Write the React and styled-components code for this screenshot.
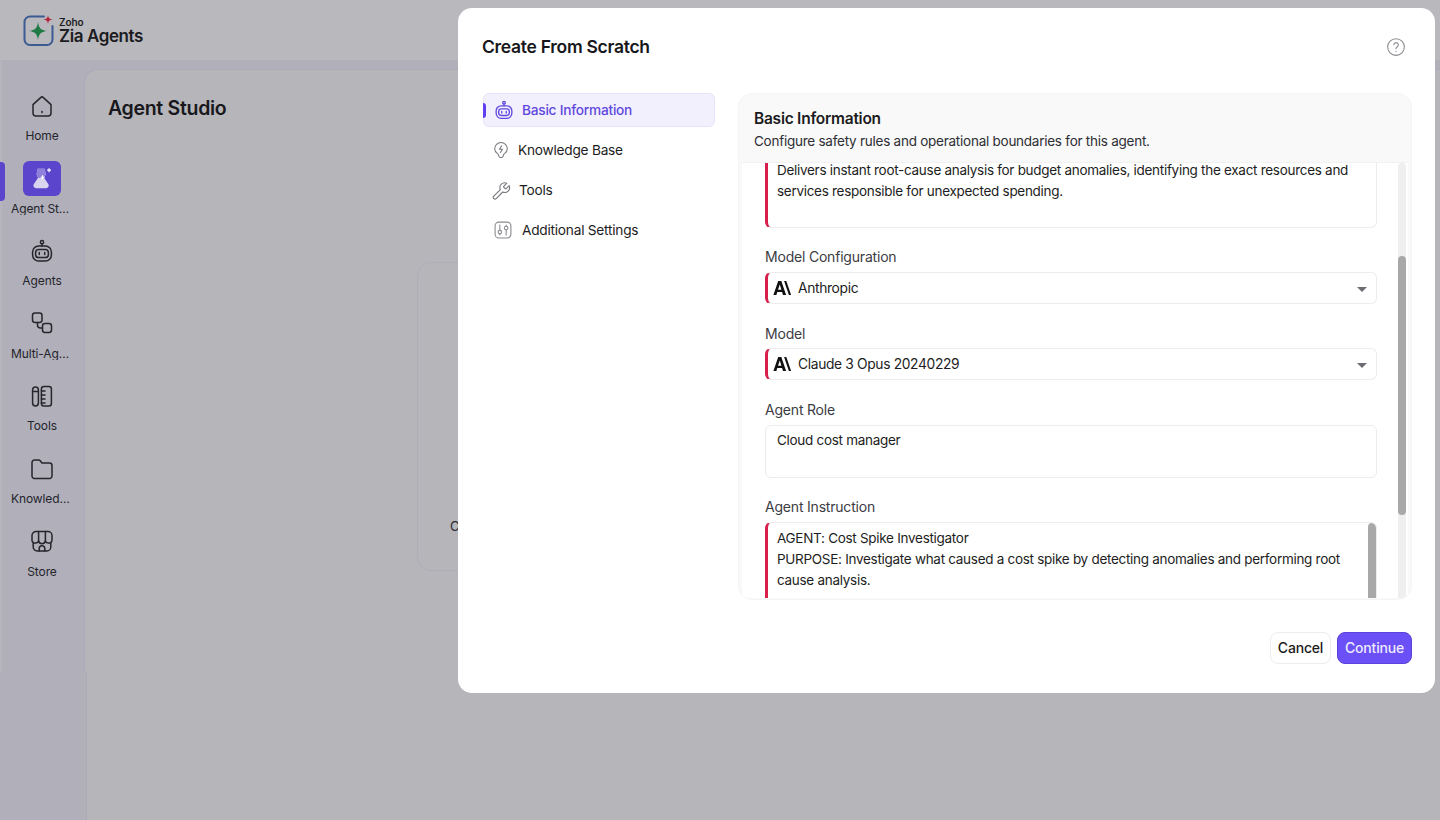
import styled, { createGlobalStyle } from "styled-components";

const GlobalStyle = createGlobalStyle`
  html, body {
    margin: 0;
    height: 100%;
    background: #b6b5ba;
    overflow: hidden;
  }
  body {
    font-family: "Inter", "Noto Sans", "Liberation Sans", sans-serif;
    color: #1b1b20;
  }
  * {
    box-sizing: border-box;
  }
`;

const Page = styled.div`
  position: relative;
  width: 1440px;
  height: 820px;
  overflow: hidden;
  display: flex;
  flex-direction: column;
`;
const Header = styled.header`
  height: 61px;
  flex: none;
  display: flex;
  align-items: center;
  padding-left: 23px;
  gap: 4px;
  background: #b9b8bd;
  border-bottom: 1px solid #b1b0b8;
`;
const LogoText = styled.div`
  display: flex;
  flex-direction: column;
  margin-top: 1px;
`;
const LogoSmall = styled.span`
  font-size: 10px;
  line-height: 10px;
  font-weight: 600;
  letter-spacing: -0.1px;
`;
const LogoBig = styled.span`
  font-size: 17px;
  line-height: 17px;
  margin-top: 1px;
  font-weight: 600;
  letter-spacing: -0.4px;
`;
const Body = styled.div`
  height: 611px;
  flex: none;
  display: flex;
  background: #b0afba;
`;
const Bottom = styled.div`
  flex: 1;
  display: flex;
  background: #b6b5ba;
`;
const BottomRail = styled.div`
  width: 87px;
  background: #b0afba;
  border-right: 1px solid #aaa9b5;
`;
const Sidebar = styled.nav`
  width: 84px;
  flex: none;
  position: relative;
  padding-top: 9px;
  border-left: 2px solid #b6b5bd;
`;
const NavItem = styled.div`
  height: 72.6px;
  margin-left: -2px;
  display: flex;
  flex-direction: column;
  align-items: center;
  width: 84px;
  padding-top: ${(p) => (p.$active ? "18px" : "21px")};
`;
const NavIcon = styled.div`
  width: 38px;
  height: ${(p) => (p.$active ? "38px" : "32px")};
  border-radius: 6px;
  display: flex;
  align-items: center;
  justify-content: center;
  background: ${(p) => (p.$active ? "#5a45cc" : "transparent")};
`;
const NavLabel = styled.span`
  width: 62px;
  margin-top: ${(p) => (p.$active ? "5px" : "8px")};
  font-size: 12px;
  line-height: 16px;
  text-align: center;
  color: #24242a;
  white-space: nowrap;
  overflow: hidden;
  text-overflow: ellipsis;
  letter-spacing: -0.1px;
`;
const ActiveMark = styled.span`
  position: absolute;
  left: -2px;
  top: 101px;
  width: 5px;
  height: 39px;
  background: #5a45cc;
  border-radius: 0 4px 4px 0;
`;
const Main = styled.main`
  flex: 1;
  margin-top: 8px;
  background: #b6b5ba;
  border-top: 1px solid #aaaabb;
  border-left: 1px solid #aaaabb;
  border-top-left-radius: 14px;
  padding: 26px 0 0 23px;
  position: relative;
`;
const PageTitle = styled.h1`
  margin: 0;
  font-size: 19.5px;
  line-height: 24px;
  font-weight: 600;
  letter-spacing: -0.3px;
  color: #18181c;
`;
const EmptyCard = styled.div`
  width: 690px;
  height: 309px;
  margin: 142px 0 0 309px;
  border: 1px solid #aeaeb8;
  border-radius: 14px;
  padding: 255px 0 0 32px;
  font-size: 13px;
  color: #2a2a30;
`;

const Modal = styled.section`
  position: absolute;
  left: 458px;
  top: 8px;
  width: 977px;
  height: 685px;
  background: #fff;
  border-radius: 14px;
  padding: 0 23px 0 24px;
  display: flex;
  flex-direction: column;
`;
const ModalHead = styled.div`
  height: 85px;
  flex: none;
  display: flex;
  align-items: center;
  justify-content: space-between;
  padding: 0 6px 8px 0;
`;
const ModalTitle = styled.h2`
  margin: 0;
  font-size: 17.5px;
  font-weight: 600;
  letter-spacing: -0.3px;
  color: #17171b;
`;
const Columns = styled.div`
  flex: none;
  display: flex;
  gap: 23px;
`;
const Steps = styled.div`
  width: 233px;
  flex: none;
  display: flex;
  flex-direction: column;
  padding-left: 1px;
`;
const Step = styled.div`
  position: relative;
  height: ${(p) => (p.$active ? "34px" : "40px")};
  margin-bottom: ${(p) => (p.$active ? "3px" : "0")};
  display: flex;
  align-items: center;
  gap: ${(p) => p.$gap}px;
  padding: 0 0 0 ${(p) => p.$pad}px;
  font-size: 13.7px;
  letter-spacing: -0.24px;
  border-radius: 6px;
  color: ${(p) => (p.$active ? "#6148dd" : "#1d1d22")};
  font-weight: ${(p) => (p.$active ? 500 : 400)};
  background: ${(p) => (p.$active ? "#f3f0fe" : "transparent")};
  border: ${(p) => (p.$active ? "1px solid #e6e2fb" : "none")};
`;
const StepMark = styled.span`
  position: absolute;
  left: -1px;
  top: 9px;
  width: 3px;
  height: 15px;
  background: #5f3ff0;
  border-radius: 0 3px 3px 0;
`;
const Panel = styled.div`
  width: 674px;
  height: 507px;
  flex: none;
  display: flex;
  flex-direction: column;
  background: #f9f9f9;
  border-radius: 14px;
  border: 1px solid #f5f5f5;
  overflow: hidden;
`;
const PanelHead = styled.div`
  height: 68px;
  flex: none;
  padding: 15px 15px 0;
`;
const PanelTitle = styled.h3`
  margin: 0;
  font-size: 15.5px;
  line-height: 20px;
  font-weight: 600;
  letter-spacing: -0.25px;
  color: #1b1b20;
`;
const PanelSub = styled.p`
  margin: 2px 0 0;
  font-size: 13.5px;
  line-height: 20px;
  letter-spacing: -0.25px;
  color: #2e2e34;
`;
const Scroller = styled.div`
  height: 436px;
  margin: 0 3px;
  background: #fff;
  border-top: 1px solid #f1f1f1;
  display: flex;
  overflow: hidden;
`;
const Form = styled.div`
  flex: 1;
  padding-left: 23px;
  padding-right: 21px;
  overflow: hidden;
`;
const Track = styled.div`
  width: 8px;
  flex: none;
  margin-right: 2px;
  background: #efefef;
  border-radius: 4px 4px 0 0;
  padding-top: 93px;
`;
const Thumb = styled.div`
  width: 8px;
  height: 259px;
  background: #a8a8a8;
  border-radius: 4px;
`;
const Label = styled.div`
  font-size: 14px;
  line-height: 18px;
  letter-spacing: -0.2px;
  color: #3c3c43;
  margin: ${(p) => p.$top}px 0 ${(p) => p.$bottom ?? 6}px;
`;
const TextBox = styled.div`
  position: relative;
  height: ${(p) => p.$height}px;
  margin-top: ${(p) => p.$shift || 0}px;
  padding: ${(p) => (p.$error ? "5px" : "4px")} 26px 0 ${(p) => (p.$error ? "9px" : "11px")};
  font-size: 13.5px;
  line-height: 21px;
  letter-spacing: -0.29px;
  color: #1d1d22;
  background: #fff;
  border: 1px solid #ececec;
  border-left: ${(p) => (p.$error ? "3px solid #d81e4a" : "1px solid #ececec")};
  border-radius: 6px;
  overflow: hidden;
`;
const SelectBox = styled.div`
  height: 32px;
  display: flex;
  align-items: center;
  gap: 6px;
  padding: 0 9px 1px 5px;
  font-size: 13.8px;
  letter-spacing: -0.34px;
  color: #1d1d22;
  background: #fff;
  border: 1px solid #ececec;
  border-left: 3px solid #d81e4a;
  border-radius: 6px;
`;
const Caret = styled.span`
  margin-left: auto;
  width: 0;
  height: 0;
  margin-top: 3px;
  border-left: 5px solid transparent;
  border-right: 5px solid transparent;
  border-top: 5px solid #6c6c72;
`;
const InnerBar = styled.span`
  position: absolute;
  top: 0;
  right: 0;
  width: 8px;
  height: 100px;
  background: #a8a8a8;
  border-radius: 4px;
`;
const Footer = styled.div`
  flex: none;
  display: flex;
  justify-content: flex-end;
  gap: 6px;
  margin-top: 32px;
`;
const Button = styled.button`
  height: 32px;
  padding: 0 0 1px;
  width: ${(p) => (p.$primary ? "75px" : "61px")};
  font-family: inherit;
  font-size: 14px;
  font-weight: 500;
  letter-spacing: -0.2px;
  border-radius: 8px;
  color: ${(p) => (p.$primary ? "#eeeaff" : "#1b1b20")};
  background: ${(p) => (p.$primary ? "#6a50f6" : "#fff")};
  border: 1px solid ${(p) => (p.$primary ? "#5a43d8" : "#ededed")};
`;

const Svg = ({ size = 24, children, color = "#26262c", width = 1.5 }) => (
  <svg
    width={size}
    height={size}
    viewBox="0 0 24 24"
    fill="none"
    stroke={color}
    strokeWidth={width}
    strokeLinecap="round"
    strokeLinejoin="round"
  >
    {children}
  </svg>
);

const BotShape = () => (
  <>
    <circle cx="12" cy="3.2" r="1.6" />
    <path d="M12 4.8V7" />
    <rect x="2.6" y="7" width="18.8" height="15" rx="6" />
    <rect x="5.6" y="10.6" width="12.8" height="8" rx="3.2" />
    <path d="M9.3 13.6v2M14.7 13.6v2" />
  </>
);

const HomeIcon = () => (
  <Svg>
    <path d="M3 10.6 10.6 3.6a2 2 0 0 1 2.8 0L21 10.6v8.4a3 3 0 0 1-3 3H6a3 3 0 0 1-3-3z" />
    <path d="M12 17.6v.8" />
  </Svg>
);
const StudioIcon = () => (
  <svg width="26" height="26" viewBox="0 0 24 24">
    <path d="M8 3.5h6.5l1 5-1.5 3.5 3.8 5.5a2.5 2.5 0 0 1-2 3.9H6.5a2.5 2.5 0 0 1-2-3.9L8.3 12 7 8.5z" fill="#d9d5ee" />
    <path d="M8 3.5h6.5l1 5-1.500 3.500H8.300L7 8.500z" fill="#8f80dc" />
    <path d="M18.500 3v3.600M16.700 4.800h3.600M12.500 9.500v3.600M10.700 11.300h3.600" stroke="#fff" strokeWidth="1.1" />
  </svg>
);
const AgentsIcon = () => (
  <Svg>
    <BotShape />
  </Svg>
);
const MultiIcon = () => (
  <Svg>
    <rect x="2.5" y="2" width="9.5" height="9.5" rx="2.4" />
    <rect x="12.5" y="12.5" width="9" height="9" rx="2.4" />
    <path d="M7.5 11.5V14a3 3 0 0 0 3 3h2" />
  </Svg>
);
const ToolsIcon = () => (
  <Svg>
    <path d="M2.6 6a2.9 2.9 0 0 1 5.8 0v13a2.9 2.9 0 0 1-5.8 0z" />
    <path d="M2.6 7.5h5.8" />
    <rect x="11.4" y="2.6" width="10" height="19.4" rx="2.5" />
    <path d="M11.4 7H15M11.4 11H15M11.4 15H15M11.4 19H15" />
  </Svg>
);
const FolderIcon = () => (
  <Svg>
    <path d="M2 5.5A2.5 2.5 0 0 1 4.5 3h4.2a2 2 0 0 1 1.5.7L12 6h7.5A2.5 2.5 0 0 1 22 8.5V19a2.5 2.5 0 0 1-2.5 2.5h-15A2.5 2.5 0 0 1 2 19z" />
  </Svg>
);
const StoreIcon = () => (
  <Svg>
    <path d="M6 2.5h12a4 4 0 0 1 4 4v5a3 3 0 0 1-3.4 2.6A3.4 3.4 0 0 1 15.4 12a3.5 3.5 0 0 1-6.8 0 3.4 3.4 0 0 1-3.2 2.1A3 3 0 0 1 2 11.5v-5a4 4 0 0 1 4-4z" />
    <path d="M8.6 2.5V12M15.4 2.5V12" />
    <path d="M3.2 13.6V18a4 4 0 0 0 4 4h9.6a4 4 0 0 0 4-4v-4.4" />
    <path d="M9.2 22v-2.5a2.8 2.8 0 0 1 5.6 0V22" />
  </Svg>
);
const ZiaLogo = () => (
  <svg width="32" height="32" viewBox="0 0 32 32" fill="none">
    <path
      d="M21 2.5H7A5.5 5.5 0 0 0 1.5 8v17.500A5.5 5.5 0 0 0 7 31h17a5.5 5.5 0 0 0 5.5-5.5V12"
      stroke="#3c5a94"
      strokeWidth="2"
      strokeLinecap="round"
    />
    <path d="M15 8c.7 6 2.8 8.2 9.2 9-6.4.8-8.5 3-9.2 9-.7-6-2.8-8.2-9.2-9 6.4-.8 8.5-3 9.2-9z" fill="#1f7a45" />
    <path d="M25 1c.3 3 1.4 4.1 4.5 4.5-3.1.4-4.2 1.5-4.5 4.5-.3-3-1.4-4.1-4.5-4.5 3.1-.4 4.2-1.5 4.5-4.5z" fill="#b3243a" />
  </svg>
);
const HelpIcon = () => (
  <Svg size={20} color="#8a8a90" width={1.3}>
    <circle cx="12" cy="12" r="10" />
    <path d="M9.4 9.4a2.7 2.7 0 1 1 4.2 2.3c-1 .6-1.6 1.2-1.6 2.3" />
    <path d="M12 17.2v.1" />
  </Svg>
);
const BulbIcon = () => (
  <Svg size={18} color="#77777d" width={1.4}>
    <path d="M12 2a8.4 8.4 0 0 0-8.4 8.4c0 3 1.6 5.1 3.7 6.5.9.6 1.3 1.3 1.5 2.100l.3 1.100a2.400 2.400 0 0 0 2.300 1.900h1.200a2.400 2.400 0 0 0 2.300-1.900l.3-1.100c.2-.8.6-1.500 1.500-2.100 2.100-1.400 3.700-3.500 3.700-6.500A8.400 8.400 0 0 0 12 2z" />
    <path d="M12.8 6.5 10 11h4l-2.800 4.400" />
  </Svg>
);
const WrenchIcon = () => (
  <Svg size={19} color="#77777d" width={1.4}>
    <path d="M15 6.500a1 1 0 0 0 0 1.400l1.600 1.600a1 1 0 0 0 1.400 0l3.600-3.600a6 6 0 0 1-8 8l-8.300 8.300a2.100 2.100 0 0 1-3-3l8.300-8.300a6 6 0 0 1 8-8z" />
  </Svg>
);
const SettingsIcon = () => (
  <Svg size={20} color="#8a8a90" width={1.3}>
    <rect x="2.5" y="2.5" width="19" height="19" rx="4.5" />
    <circle cx="8.2" cy="14.5" r="2.1" />
    <circle cx="15.8" cy="9.5" r="2.1" />
    <path d="M8.2 6v6.4M8.2 16.6V18M15.8 6v1.4M15.8 11.6V18" />
  </Svg>
);
const AnthropicLogo = () => (
  <svg width="19" height="14" viewBox="0 0 19 14">
    <path d="M5.2 0h3.100l4.800 14H10l-.9-2.900H4.300L3.400 14H.4zm3.200 8.800L6.800 3.500 5 8.800z" fill="#111" />
    <path d="M11.100 0h2.200l4.800 14h-2.200z" fill="#111" />
  </svg>
);

const navItems = [
  { label: "Home", icon: <HomeIcon /> },
  { label: "Agent Studio", icon: <StudioIcon />, active: true },
  { label: "Agents", icon: <AgentsIcon /> },
  { label: "Multi-Agents", icon: <MultiIcon /> },
  { label: "Tools", icon: <ToolsIcon /> },
  { label: "Knowledge Base", icon: <FolderIcon /> },
  { label: "Store", icon: <StoreIcon /> },
];

export default function App() {
  return (
    <Page>
      <GlobalStyle />
      <Header>
        <ZiaLogo />
        <LogoText>
          <LogoSmall>Zoho</LogoSmall>
          <LogoBig>Zia Agents</LogoBig>
        </LogoText>
      </Header>
      <Body>
        <Sidebar>
          <ActiveMark />
          {navItems.map((item) => (
            <NavItem key={item.label} $active={item.active}>
              <NavIcon $active={item.active}>{item.icon}</NavIcon>
              <NavLabel $active={item.active}>{item.label}</NavLabel>
            </NavItem>
          ))}
        </Sidebar>
        <Main>
          <PageTitle>Agent Studio</PageTitle>
          <EmptyCard>Create</EmptyCard>
        </Main>
      </Body>
      <Bottom>
        <BottomRail />
      </Bottom>

      <Modal>
        <ModalHead>
          <ModalTitle>Create From Scratch</ModalTitle>
          <HelpIcon />
        </ModalHead>
        <Columns>
          <Steps>
            <Step $active $gap={8} $pad={10}>
              <StepMark />
              <Svg size={20} color="#6148dd" width={1.6}>
                <BotShape />
              </Svg>
              Basic Information
            </Step>
            <Step $gap={8} $pad={9}>
              <BulbIcon />
              Knowledge Base
            </Step>
            <Step $gap={8} $pad={9}>
              <WrenchIcon />
              Tools
            </Step>
            <Step $gap={9} $pad={10}>
              <SettingsIcon />
              Additional Settings
            </Step>
          </Steps>
          <Panel>
            <PanelHead>
              <PanelTitle>Basic Information</PanelTitle>
              <PanelSub>Configure safety rules and operational boundaries for this agent.</PanelSub>
            </PanelHead>
            <Scroller>
              <Form>
                <TextBox $error $height={74} $shift={-9}>
                  Delivers instant root-cause analysis for budget anomalies, identifying the exact
                  resources and services responsible for unexpected spending.
                </TextBox>
                <Label $top={20}>Model Configuration</Label>
                <SelectBox>
                  <AnthropicLogo />
                  Anthropic
                  <Caret />
                </SelectBox>
                <Label $top={21} $bottom={5}>
                  Model
                </Label>
                <SelectBox>
                  <AnthropicLogo />
                  Claude 3 Opus 20240229
                  <Caret />
                </SelectBox>
                <Label $top={21}>Agent Role</Label>
                <TextBox $height={53}>Cloud cost manager</TextBox>
                <Label $top={20}>Agent Instruction</Label>
                <TextBox $error $height={90}>
                  <InnerBar />
                  AGENT: Cost Spike Investigator
                  <br />
                  PURPOSE: Investigate what caused a cost spike by detecting anomalies and performing
                  root cause analysis.
                </TextBox>
              </Form>
              <Track>
                <Thumb />
              </Track>
            </Scroller>
          </Panel>
        </Columns>
        <Footer>
          <Button>Cancel</Button>
          <Button $primary>Continue</Button>
        </Footer>
      </Modal>
    </Page>
  );
}
